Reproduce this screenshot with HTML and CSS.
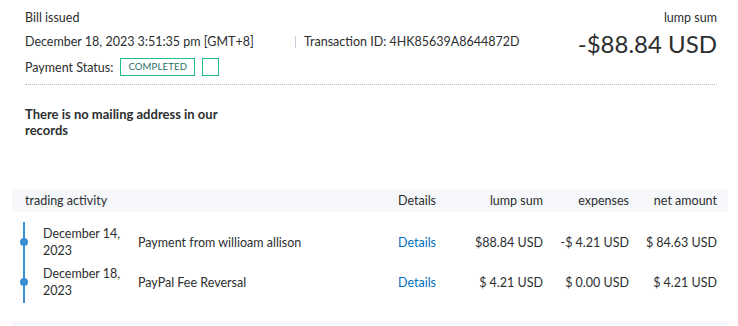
FILE: index.html
```html
<!DOCTYPE html>
<html lang="en">
<head>
  <meta charset="UTF-8">
  <meta name="viewport" content="width=device-width, initial-scale=1.0">
  <title>Transaction details</title>
  <link rel="stylesheet" href="styles.css">
</head>
<body>
  <div class="page">
    <div class="summary">
      <div class="summary-left">
        <div class="label">Bill issued</div>
        <div class="meta">
          <span class="date">December 18, 2023 3:51:35 pm [GMT+8]</span>
          <span class="txn">Transaction ID: 4HK85639A8644872D</span>
        </div>
        <div class="status">
          <span>Payment Status:</span>
          <span class="badge">COMPLETED</span>
          <span class="badge empty"></span>
        </div>
      </div>
      <div class="summary-right">
        <div class="label">lump sum</div>
        <div class="total">-$88.84 USD</div>
      </div>
    </div>

    <p class="address">There is no mailing address in our records</p>

    <div class="activity">
      <div class="row head">
        <div class="span2">trading activity</div>
        <div>Details</div>
        <div class="num">lump sum</div>
        <div class="num">expenses</div>
        <div class="num">net amount</div>
      </div>
      <div class="timeline">
        <div class="row item">
          <div class="when">December 14,<br>2023</div>
          <div>Payment from willioam allison</div>
          <div><a href="#">Details</a></div>
          <div class="num">$88.84 USD</div>
          <div class="num">-$ 4.21 USD</div>
          <div class="num">$ 84.63 USD</div>
        </div>
        <div class="row item">
          <div class="when">December 18,<br>2023</div>
          <div>PayPal Fee Reversal</div>
          <div><a href="#">Details</a></div>
          <div class="num">$ 4.21 USD</div>
          <div class="num">$ 0.00 USD</div>
          <div class="num">$ 4.21 USD</div>
        </div>
      </div>
      <div class="foot"></div>
    </div>
  </div>
</body>
</html>
```

FILE: styles.css
```css
body {
  margin: 0;
  font-family: Lato, 'Noto Sans', sans-serif;
  font-size: 12.5px;
  color: #2c2e2f;
  background: #fff;
}
.page {
  padding: 0 10px 0 12px;
}
.summary {
  display: flex;
  justify-content: space-between;
  margin: 0 11px 0 13px;
  padding: 9px 0 8px;
  border-bottom: 1px dotted #bbb;
}
.label {
  line-height: 18px;
}
.meta {
  display: flex;
  margin-top: 6px;
  line-height: 18px;
}
.date {
  width: 270px;
}
.txn {
  border-left: 1px solid #ccd;
  padding-left: 8px;
  line-height: 12px;
  margin-top: 3px;
  height: 12px;
}
.status {
  display: flex;
  align-items: center;
  gap: 7px;
  margin-top: 7px;
  height: 18px;
}
.badge {
  box-sizing: border-box;
  height: 18px;
  padding: 0 7px;
  border: 1px solid #22bf8c;
  color: #1d6f66;
  font-size: 9.5px;
  letter-spacing: 0.2px;
  line-height: 16px;
}
.badge.empty {
  width: 17px;
  padding: 0;
}
.summary-right {
  text-align: right;
}
.total {
  font-size: 24px;
  line-height: 28px;
  margin-top: 3px;
}
.address {
  margin: 21px 13px 0;
  width: 215px;
  font-size: 13px;
  font-weight: bold;
  line-height: 16px;
}
.activity {
  margin-top: 51px;
}
.row {
  display: grid;
  grid-template-columns: 113px 260px 62px 83px 86px 88px;
  padding: 0 11px 0 13px;
}
.span2 {
  grid-column: span 2;
}
.num {
  text-align: right;
}
.head {
  background: #f5f7fa;
  line-height: 23px;
}
.timeline {
  position: relative;
  margin: 10px 0 0 11px;
  padding-bottom: 1px;
  border-left: 2px solid #3b8fd4;
}
.item {
  position: relative;
  align-items: center;
  height: 40px;
  padding-left: 0;
}
.item::before {
  content: '';
  position: absolute;
  left: -5px;
  top: 16px;
  width: 8px;
  height: 8px;
  border-radius: 50%;
  background: #3b8fd4;
}
.when {
  padding-left: 18px;
  line-height: 17px;
}
.item a {
  color: #0070ba;
  text-decoration: none;
}
.foot {
  margin-top: 18px;
  height: 6px;
  background: #f5f7fa;
}
```
